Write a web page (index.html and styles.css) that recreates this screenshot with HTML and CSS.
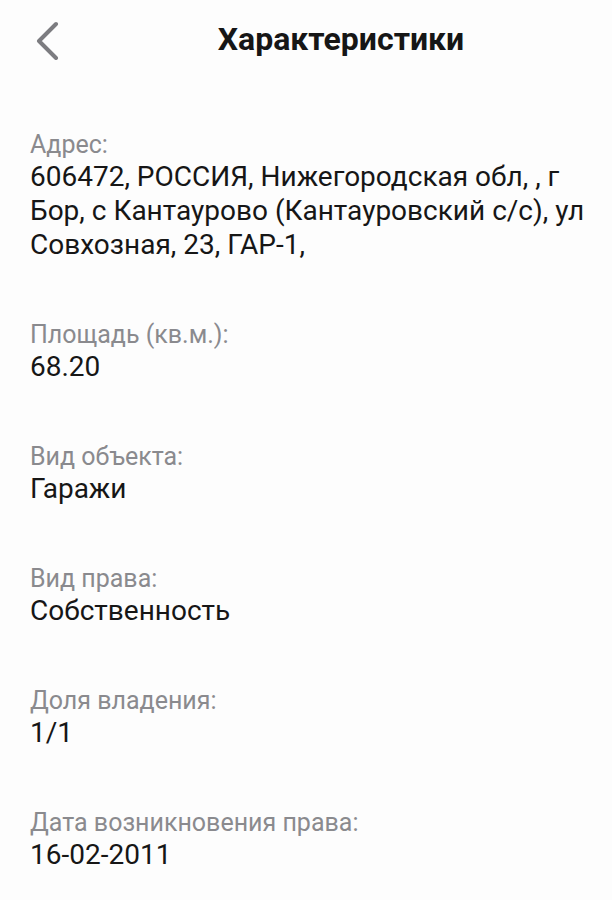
FILE: index.html
```html
<!DOCTYPE html>
<html lang="ru">
<head>
    <meta charset="UTF-8">
    <meta name="viewport" content="width=device-width, initial-scale=1.0">
    <title>Характеристики</title>
    <link rel="stylesheet" href="styles.css">
</head>
<body>
    <div class="header">
        <a href="#" class="back">
            <svg width="26" height="40" viewBox="0 0 26 40">
                <path d="M22 4 L5 21 L22 38" fill="none" stroke="#7c7c80" stroke-width="4" stroke-linecap="round" stroke-linejoin="round"/>
            </svg>
        </a>
        <h1>Характеристики</h1>
    </div>

    <div class="list">
        <div class="item">
            <div class="label">Адрес:</div>
            <div class="value">606472, РОССИЯ, Нижегородская обл, , г Бор, с Кантаурово (Кантауровский с/с), ул Совхозная, 23, ГАР-1,</div>
        </div>
        <div class="item">
            <div class="label">Площадь (кв.м.):</div>
            <div class="value">68.20</div>
        </div>
        <div class="item">
            <div class="label">Вид объекта:</div>
            <div class="value">Гаражи</div>
        </div>
        <div class="item">
            <div class="label">Вид права:</div>
            <div class="value">Собственность</div>
        </div>
        <div class="item">
            <div class="label">Доля владения:</div>
            <div class="value">1/1</div>
        </div>
        <div class="item">
            <div class="label">Дата возникновения права:</div>
            <div class="value">16-02-2011</div>
        </div>
    </div>
</body>
</html>
```

FILE: styles.css
```css
body {
    font-family: Roboto, "Noto Sans", sans-serif;
    margin: 0;
    background: #fdfdfd;
    color: #161616;
}
.header {
    display: flex;
    align-items: center;
    height: 80px;
    padding: 0 0 0 34px;
}
.back {
    display: flex;
    width: 26px;
    height: 40px;
}
.header h1 {
    flex: 1;
    margin: 0 0 2px;
    padding-left: 10px;
    text-align: center;
    font-size: 32px;
    font-weight: 700;
    color: #161616;
}
.list {
    padding: 50px 20px 0 30px;
    display: flex;
    flex-direction: column;
    gap: 58px;
}
.label {
    font-size: 25px;
    line-height: 30px;
    color: #8a8a8e;
}
.value {
    font-size: 28px;
    line-height: 34px;
}
```
